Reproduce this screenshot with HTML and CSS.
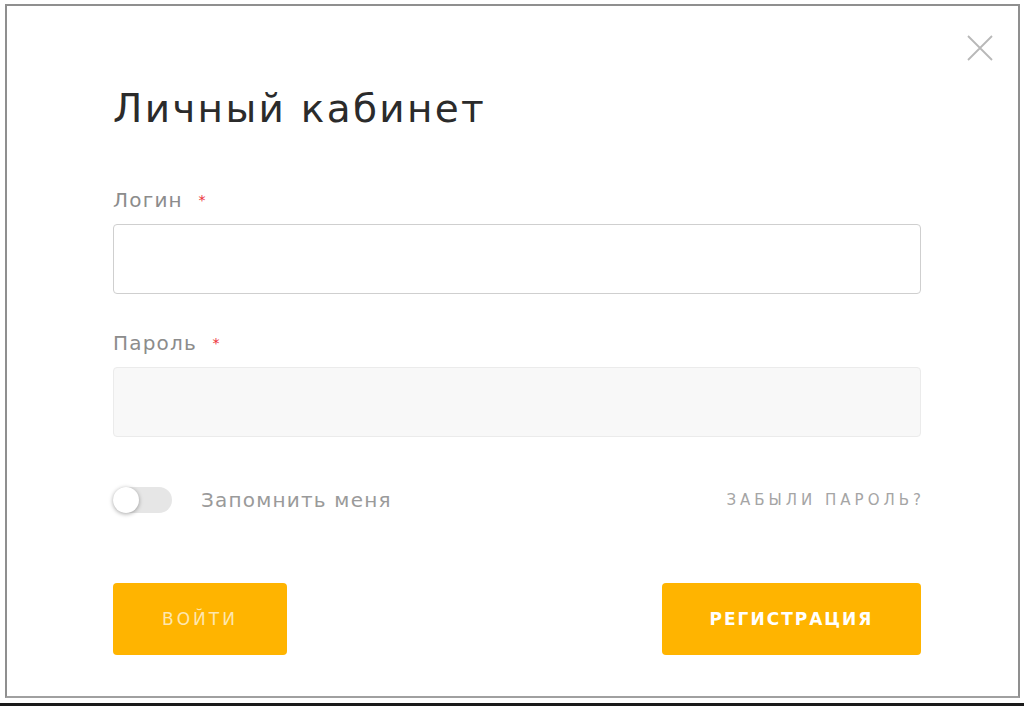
FILE: index.html
```html
<!DOCTYPE html>
<html lang="ru">
<head>
<meta charset="utf-8">
<title>Личный кабинет</title>
<link rel="stylesheet" href="styles.css">
</head>
<body>
<div class="screen">
  <div class="modal">
    <span class="close">
      <svg width="28" height="28" viewBox="0 0 28 28"><path d="M2 2L26 26M26 2L2 26" stroke="#b8b8b8" stroke-width="1.8" fill="none"/></svg>
    </span>
    <div class="content">
      <h1 class="title">Личный кабинет</h1>
      <label class="label">Логин <span class="req">*</span></label>
      <input type="text" class="field">
      <label class="label label-2">Пароль <span class="req">*</span></label>
      <input type="password" class="field field-off">
      <div class="row">
        <div class="remember">
          <span class="toggle"><span class="knob"></span></span>
          <span class="remember-text">Запомнить меня</span>
        </div>
        <a class="forgot">ЗАБЫЛИ ПАРОЛЬ?</a>
      </div>
      <div class="buttons">
        <button class="btn btn-login">ВОЙТИ</button>
        <button class="btn btn-reg">РЕГИСТРАЦИЯ</button>
      </div>
    </div>
  </div>
  <div class="bar"></div>
</div>
</body>
</html>
```

FILE: styles.css
```css
*{margin:0;padding:0;box-sizing:border-box;}
body{background:#fff;font-family:"DejaVu Sans","Noto Sans",sans-serif;height:707px;overflow:hidden;}
.screen{padding:4px 4px 0 5px;}
.modal{position:relative;height:694px;border:2px solid #8f8f8f;border-bottom-color:#a0a0a0;background:#fff;}
.close{position:absolute;right:24px;top:28px;width:28px;height:28px;}
.content{width:808px;margin-left:106px;padding-top:83px;}
.title{font-weight:normal;font-size:39px;color:#2b2b2b;line-height:40px;letter-spacing:2.3px;}
.label{display:block;font-size:20px;color:#8c8c8c;margin-top:61px;line-height:20px;letter-spacing:1.2px;}
.label-2{margin-top:39px;}
.req{color:#ec2e36;font-size:14px;vertical-align:top;margin-left:8px;}
.field{display:block;width:808px;height:70px;margin-top:14px;border:1px solid #cfcfcf;border-radius:4px;background:#fff;outline:none;}
.field-off{background:#f8f8f8;border-color:#ebebeb;}
.row{display:flex;justify-content:space-between;align-items:center;margin-top:50px;height:26px;}
.remember{display:flex;align-items:center;}
.toggle{position:relative;display:block;width:59px;height:26px;border-radius:13px;background:#e6e6e6;}
.knob{position:absolute;left:0;top:0;width:26px;height:26px;border-radius:50%;background:#fff;box-shadow:0 1px 4px rgba(0,0,0,0.35);}
.remember-text{margin-left:29px;font-size:20px;color:#9a9a9a;letter-spacing:1.2px;}
.forgot{font-size:15px;letter-spacing:4px;color:#a5a5a5;margin-right:-4px;}
.buttons{display:flex;justify-content:space-between;margin-top:70px;}
.btn{height:72px;border:none;border-radius:4px;background:#ffb400;color:#fff;font-family:inherit;font-size:17px;letter-spacing:2px;}
.btn-login{width:174px;color:#fde7b0;letter-spacing:3px;}
.btn-reg{width:259px;font-weight:bold;}
.bar{height:3px;margin-top:5px;background:#1a1a1a;margin-left:-5px;margin-right:-4px;}
```
